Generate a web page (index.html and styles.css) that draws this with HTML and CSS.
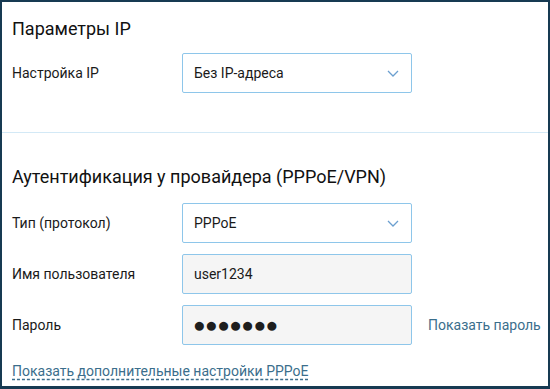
FILE: index.html
```html
<!DOCTYPE html>
<html lang="ru">
<head>
<meta charset="utf-8">
<link rel="stylesheet" href="styles.css">
</head>
<body>
<div class="frame">
  <section class="section first">
    <h2 class="title">Параметры IP</h2>
    <div class="row">
      <div class="label">Настройка IP</div>
      <div class="field select">
        <span class="value">Без IP-адреса</span>
        <svg class="chev" width="12" height="7" viewBox="0 0 12 7"><path d="M1 1 L6 6 L11 1" fill="none" stroke="#6b9fcf" stroke-width="1.3"/></svg>
      </div>
    </div>
  </section>
  <section class="section second">
    <h2 class="title">Аутентификация у провайдера (PPPoE/VPN)</h2>
    <div class="rows">
      <div class="row">
        <div class="label">Тип (протокол)</div>
        <div class="field select">
          <span class="value">PPPoE</span>
          <svg class="chev" width="12" height="7" viewBox="0 0 12 7"><path d="M1 1 L6 6 L11 1" fill="none" stroke="#6b9fcf" stroke-width="1.3"/></svg>
        </div>
      </div>
      <div class="row">
        <div class="label">Имя пользователя</div>
        <div class="field input"><span class="value">user1234</span></div>
      </div>
      <div class="row">
        <div class="label">Пароль</div>
        <div class="field input"><span class="value dots">●●●●●●●</span></div>
        <a class="show">Показать пароль</a>
      </div>
    </div>
    <a class="more">Показать дополнительные настройки PPPoE</a>
  </section>
</div>
</body>
</html>
```
FILE: styles.css
```css
html, body {
  margin: 0;
  padding: 0;
  background: #ffffff;
}
body {
  font-family: Roboto, "Liberation Sans", sans-serif;
  color: #1a1a1a;
}
.frame {
  box-sizing: border-box;
  width: 550px;
  height: 389px;
  border: 2px solid #173a52;
  border-bottom-width: 3px;
  overflow: hidden;
}
.section {
  padding: 0 0 0 10px;
}
.first {
  padding-top: 16px;
  height: 114px;
  border-bottom: 1px solid #d3e9f6;
}
.second {
  padding-top: 33px;
}
.title {
  margin: 0;
  font-size: 18px;
  font-weight: 400;
  line-height: 22px;
  color: #111;
}
.first .title { margin-bottom: 13px; }
.second .title { margin-bottom: 15px; }
.rows {
  display: flex;
  flex-direction: column;
  gap: 11px;
}
.row {
  display: flex;
  align-items: center;
  height: 40px;
}
.label {
  width: 170px;
  font-size: 14px;
  color: #1a1a1a;
}
.field {
  box-sizing: border-box;
  width: 230px;
  height: 40px;
  border: 1px solid #8ec6ea;
  border-radius: 2px;
  display: flex;
  align-items: center;
  padding: 0 12px 0 11px;
  font-size: 14px;
}
.select {
  justify-content: space-between;
  background: #fff;
}
.input {
  background: #f5f5f5;
}
.chev {
  margin-right: 0;
  margin-top: 1px;
}
.dots {
  font-size: 21px;
  line-height: 21px;
  letter-spacing: -0.6px;
  color: #1e1e1e;
  margin-left: -1px;
}
.show {
  margin-left: 16px;
  font-size: 14px;
  color: #3b6e8c;
}
.more {
  display: inline-block;
  margin-top: 18px;
  font-size: 14px;
  color: #3b6e8c;
  text-decoration: underline dashed;
  text-decoration-color: #3b6e8c;
  text-underline-offset: 3px;
}
```
